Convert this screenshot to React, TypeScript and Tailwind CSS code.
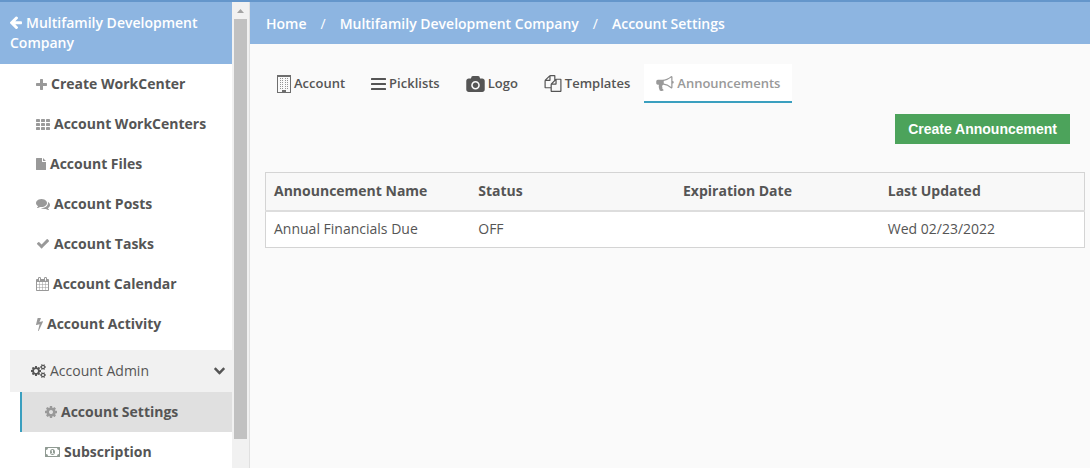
import type { ReactNode } from "react";

type IconProps = { className?: string };

type GlyphProps = IconProps & { box: string; d?: string; children?: ReactNode };

function Glyph({ box, d, className = "", children }: GlyphProps) {
  return (
    <svg viewBox={box} fill="currentColor" aria-hidden="true" className={`shrink-0 ${className}`}>
      {d ? <path d={d} /> : children}
    </svg>
  );
}

const ArrowLeft = ({ className }: IconProps) => (
  <Glyph
    box="64 128 1472 1600"
    className={className}
    d="M1536 896v128q0 53-32.5 90.5t-84.5 37.5h-704l293 294q38 36 38 90t-38 90l-75 76q-37 37-90 37-52 0-91-37l-651-652q-37-37-37-90 0-52 37-91l651-650q38-38 91-38 52 0 90 38l75 74q38 38 38 91t-38 91l-293 293h704q52 0 84.5 37.5t32.5 90.5z"
  />
);

const Plus = ({ className }: IconProps) => (
  <Glyph
    box="192 128 1408 1408"
    className={className}
    d="M1600 736v192q0 40-28 68t-68 28h-416v416q0 40-28 68t-68 28h-192q-40 0-68-28t-28-68v-416h-416q-40 0-68-28t-28-68v-192q0-40 28-68t68-28h416v-416q0-40 28-68t68-28h192q40 0 68 28t28 68v416h416q40 0 68 28t28 68z"
  />
);

const Grid = ({ className }: IconProps) => (
  <Glyph box="0 0 14 11" className={className}>
    {[0, 4, 8].map((y) =>
      [0, 5, 10].map((x) => <rect key={`${x}-${y}`} x={x} y={y} width="4" height="3" rx="0.4" />)
    )}
  </Glyph>
);

const File = ({ className }: IconProps) => (
  <Glyph box="0 0 10 12" className={className} d="M.6 0H6v3.4q0 .6.6.6H10v7.4q0 .6-.6.6H.6q-.6 0-.6-.6V.6Q0 0 .6 0zM7 0.1L9.9 3H7z" />
);

const Comments = ({ className }: IconProps) => (
  <Glyph
    box="0 256 1792 1408"
    className={className}
    d="M1408 768q0 139-94 257t-256.5 186.5-353.5 68.5q-86 0-176-16-124 88-278 128-36 9-86 16h-3q-11 0-20.5-8t-11.5-21q-1-3-1-6.5t.5-6.5 2-6l2.5-5 3.5-5.5 4-5 4.5-5 4-4.5q5-6 23-25t26-29.5 22.5-29 25-38.5 20.5-44q-124-72-195-177t-71-224q0-139 94-257t256.5-186.5 353.5-68.5 353.5 68.5 256.5 186.5 94 257zm384 256q0 120-71 224.5t-195 176.5q10 24 20.5 44t25 38.5 22.5 29 26 29.5 23 25q1 1 4 4.5t4.5 5 4 5 3.5 5.5l2.5 5 2 6 .5 6.5-1 6.5q-3 14-13 22t-22 7q-50-7-86-16-154-40-278-128-90 16-176 16-271 0-472-132 58 4 88 4 161 0 309-45t264-129q125-92 192-212t67-254q0-77-23-152 129 71 204 178t75 230z"
  />
);

const Check = ({ className }: IconProps) => (
  <Glyph
    box="0 320 1792 1280"
    className={className}
    d="M1671 566q0 40-28 68l-724 724-136 136q-28 28-68 28t-68-28l-136-136-362-362q-28-28-28-68t28-68l136-136q28-28 68-28t68 28l294 295 656-657q28-28 68-28t68 28l136 136q28 28 28 68z"
  />
);

const Calendar = ({ className }: IconProps) => (
  <Glyph
    box="64 0 1664 1792"
    className={className}
    d="M192 1664h288v-288h-288v288zm352 0h320v-288h-320v288zm-352-352h288v-320h-288v320zm352 0h320v-320h-320v320zm-352-384h288v-288h-288v288zm736 736h320v-288h-320v288zm-384-736h320v-288h-320v288zm768 736h288v-288h-288v288zm-384-352h320v-320h-320v320zm-352-864v-288q0-13-9.5-22.5t-22.5-9.5h-64q-13 0-22.5 9.5t-9.5 22.5v288q0 13 9.5 22.5t22.5 9.5h64q13 0 22.5-9.5t9.5-22.5zm736 864h288v-320h-288v320zm-384-384h320v-288h-320v288zm384 0h288v-288h-288v288zm32-480v-288q0-13-9.5-22.5t-22.5-9.5h-64q-13 0-22.5 9.5t-9.5 22.5v288q0 13 9.5 22.5t22.5 9.5h64q13 0 22.5-9.5t9.5-22.5zm384-64v1280q0 52-38 90t-90 38h-1408q-52 0-90-38t-38-90v-1280q0-52 38-90t90-38h128v-96q0-66 47-113t113-47h64q66 0 113 47t47 113v96h384v-96q0-66 47-113t113-47h64q66 0 113 47t47 113v96h128q52 0 90 38t38 90z"
  />
);

const Bolt = ({ className }: IconProps) => (
  <Glyph
    box="448 0 896 1792"
    className={className}
    d="M1333 566q18 20 7 44l-540 1157q-13 25-42 25-4 0-14-2-17-5-25.5-19t-4.5-30l197-808-406 101q-4 1-12 1-18 0-31-11-18-15-13-39l201-825q4-14 16-23t28-9h328q19 0 32 12.5t13 29.5q0 8-5 18l-171 463 396-98q8-2 12-2 19 0 34 15z"
  />
);

const Cogs = ({ className }: IconProps) => (
  <Glyph
    box="0 0 1920 1792"
    className={className}
    d="M896 896q0-106-75-181t-181-75-181 75-75 181 75 181 181 75 181-75 75-181zm768 512q0-52-38-90t-90-38-90 38-38 90q0 53 37.5 90.5t90.5 37.5 90.5-37.5 37.5-90.5zm0-1024q0-52-38-90t-90-38-90 38-38 90q0 53 37.5 90.5t90.5 37.5 90.5-37.5 37.5-90.5zm-384 421v185q0 10-7 19.5t-16 10.5l-155 24q-11 35-32 76 34 48 90 115 7 11 7 20 0 12-7 19-23 30-82.5 89.5t-78.5 59.5q-11 0-21-7l-115-90q-37 19-77 31-11 108-23 155-7 24-30 24h-186q-11 0-20-7.5t-10-17.5l-23-153q-34-10-75-31l-118 89q-7 7-20 7-11 0-21-8-144-133-144-160 0-9 7-19 10-14 41-53t47-61q-23-44-35-82l-152-24q-10-1-17-9.5t-7-19.5v-185q0-10 7-19.5t16-10.5l155-24q11-35 32-76-34-48-90-115-7-11-7-20 0-12 7-20 22-30 82-89t79-59q11 0 21 7l115 90q34-18 77-32 11-108 23-154 7-24 30-24h186q11 0 20 7.5t10 17.5l23 153q34 10 75 31l118-89q8-7 20-7 11 0 21 8 144 133 144 160 0 8-7 19-12 16-42 54t-45 60q23 48 34 82l152 23q10 2 17 10.5t7 19.5zm640 533v140q0 16-149 31-12 27-30 52 51 113 51 138 0 4-4 7-122 71-124 71-8 0-46-47t-52-68q-20 2-30 2t-30-2q-14 21-52 68t-46 47q-2 0-124-71-4-3-4-7 0-25 51-138-18-25-30-52-149-15-149-31v-140q0-16 149-31 13-29 30-52-51-113-51-138 0-4 4-7 4-2 35-20t59-34 30-16q8 0 46 46.5t52 67.5q20-2 30-2t30 2q51-71 92-112l6-2q4 0 124 70 4 3 4 7 0 25-51 138 17 23 30 52 149 15 149 31zm0-1024v140q0 16-149 31-12 27-30 52 51 113 51 138 0 4-4 7-122 71-124 71-8 0-46-47t-52-68q-20 2-30 2t-30-2q-14 21-52 68t-46 47q-2 0-124-71-4-3-4-7 0-25 51-138-18-25-30-52-149-15-149-31v-140q0-16 149-31 13-29 30-52-51-113-51-138 0-4 4-7 4-2 35-20t59-34 30-16q8 0 46 46.5t52 67.5q20-2 30-2t30 2q51-71 92-112l6-2q4 0 124 70 4 3 4 7 0 25-51 138 17 23 30 52 149 15 149 31z"
  />
);

const Cog = ({ className }: IconProps) => (
  <Glyph
    box="128 128 1536 1536"
    className={className}
    d="M1152 896q0-106-75-181t-181-75-181 75-75 181 75 181 181 75 181-75 75-181zm512-109v222q0 12-8 23t-20 13l-185 28q-19 54-39 91 35 50 107 138 10 12 10 25t-9 23q-27 37-99 108t-94 71q-12 0-26-9l-138-108q-44 23-91 38-16 136-29 186-7 28-36 28h-222q-14 0-24.5-8.5t-11.5-21.5l-28-184q-49-16-90-37l-141 107q-10 9-25 9-14 0-25-11-126-114-165-168-7-10-7-23 0-12 8-23 15-21 51-66.5t54-70.5q-27-50-41-99l-183-27q-13-2-21-12.5t-8-23.5v-222q0-12 8-23t19-13l186-28q14-46 39-92-40-57-107-138-10-12-10-24 0-10 9-23 26-36 98.5-107.5t94.5-71.5q13 0 26 10l138 107q44-23 91-38 16-136 29-186 7-28 36-28h222q14 0 24.5 8.5t11.5 21.5l28 184q49 16 90 37l142-107q9-9 24-9 13 0 25 10 129 119 165 170 7 8 7 22 0 12-8 23-15 21-51 66.5t-54 70.5q26 50 41 98l183 28q13 2 21 12.5t8 23.5z"
  />
);

const Money = ({ className }: IconProps) => (
  <Glyph box="0 0 15 10" className={className}>
    <path fillRule="evenodd" d="M.5 0h14q.5 0 .5.5v9q0 .5-.5.5H.5Q0 10 0 9.500V.5Q0 0 .5 0zM3 1Q3 3 1 3v4q2 0 2 2h9q0-2 2-2V3q-2 0-2-2z" />
    <path fillRule="evenodd" d="M7.500 2C9 2 10 3.300 10 5S9 8 7.500 8 5 6.700 5 5s1-3 2.500-3zM7.200 3L6.200 3.900l.5.5.3-.2V6h-.8v.8h2.600V6H8V3z" />
  </Glyph>
);

const ChevronDown = ({ className }: IconProps) => (
  <Glyph
    box="90 500 1612 1100"
    className={className}
    d="M1683 808l-742 741q-19 19-45 19t-45-19l-742-741q-19-19-19-45.5t19-45.5l166-165q19-19 45-19t45 19l531 531 531-531q19-19 45-19t45 19l166 165q19 19 19 45.500t-19 45.500z"
  />
);

const Building = ({ className }: IconProps) => (
  <Glyph box="0 0 14 18" className={className}>
    <path fillRule="evenodd" opacity="0.85" d="M0 0h14v18H0zM1 2v15h4v-2h4v2h4V2z" />
    <g opacity="0.6">
      {[3, 5, 7, 9, 11, 13].map((y) =>
        [3, 5, 8, 10].map((x) => <rect key={`${x}-${y}`} x={x} y={y} width="1" height="1" />)
      )}
    </g>
  </Glyph>
);

const Bars = ({ className }: IconProps) => (
  <Glyph box="0 0 15 12" className={className}>
    {[0, 5, 10].map((y) => (
      <rect key={y} y={y} width="15" height="2" rx="0.5" />
    ))}
  </Glyph>
);

const Camera = ({ className }: IconProps) => (
  <Glyph
    box="0 0 1920 1664"
    className={className}
    d="M960 672q119 0 203.5 84.500t84.500 203.500-84.500 203.500-203.500 84.500-203.500-84.500-84.500-203.500 84.500-203.500 203.500-84.500zm704-416q106 0 181 75t75 181v896q0 106-75 181t-181 75h-1408q-106 0-181-75t-75-181v-896q0-106 75-181t181-75h224l51-136q19-49 69.500-84.500t103.500-35.500h512q53 0 103.500 35.500t69.500 84.500l51 136h224zm-704 1152q185 0 316.500-131.500t131.500-316.500-131.500-316.500-316.500-131.500-316.500 131.500-131.500 316.500 131.500 316.500 316.500 131.500z"
  />
);

const Copy = ({ className }: IconProps) => (
  <Glyph
    box="0 0 1792 1792"
    className={className}
    d="M1696 384q40 0 68 28t28 68v1216q0 40-28 68t-68 28h-960q-40 0-68-28t-28-68v-288h-544q-40 0-68-28t-28-68v-672q0-40 20-88t48-76l408-408q28-28 76-48t88-20h416q40 0 68 28t28 68v328q68-40 128-40h416zm-544 213l-299 299h299v-299zm-640-384l-299 299h299v-299zm196 647l316-316v-416h-384v416q0 40-28 68t-68 28h-416v640h512v-256q0-40 20-88t48-76zm956 804v-1152h-384v416q0 40-28 68t-68 28h-416v640h896z"
  />
);

const Bullhorn = ({ className }: IconProps) => (
  <Glyph
    box="0 128 1792 1536"
    className={className}
    d="M1664 640q53 0 90.5 37.5t37.5 90.5-37.5 90.5-90.5 37.5v384q0 52-38 90t-90 38q-417-347-812-380-58 19-91 66t-31 100.5 40 92.5q-20 33-23 65.5t6 58 33.5 55 48 50 61.5 50.5q-29 58-111.5 83t-168.5 11.5-132-55.5q-7-23-29.5-87.5t-32-94.5-23-89-15-101 3.5-98.5 22-110.5h-122q-66 0-113-47t-47-113v-192q0-66 47-113t113-47h480q435 0 896-384 52 0 90 38t38 90v384zm-128 604v-954q-394 302-768 343v270q377 42 768 341z"
  />
);

const menu = [
  { label: "Create WorkCenter", icon: <Plus className="w-[11px] h-[11px]" /> },
  { label: "Account WorkCenters", icon: <Grid className="w-[14px] h-[11px]" /> },
  { label: "Account Files", icon: <File className="w-[10px] h-[12px]" /> },
  { label: "Account Posts", icon: <Comments className="w-[14px] h-[11px]" /> },
  { label: "Account Tasks", icon: <Check className="w-[14px] h-[10px]" /> },
  { label: "Account Calendar", icon: <Calendar className="w-[13px] h-[14px]" /> },
  { label: "Account Activity", icon: <Bolt className="w-[7px] h-[14px]" /> },
];

const tabs = [
  { label: "Account", icon: <Building className="w-[14px] h-[18px]" /> },
  { label: "Picklists", icon: <Bars className="w-[15px] h-[12px]" /> },
  { label: "Logo", icon: <Camera className="w-[19px] h-[16px]" /> },
  { label: "Templates", icon: <Copy className="w-[18px] h-[17px]" /> },
  { label: "Announcements", icon: <Bullhorn className="w-[18px] h-[15px]" />, active: true },
];

const crumbs = ["Home", "Multifamily Development Company", "Account Settings"];

const columns = ["Announcement Name", "Status", "Expiration Date", "Last Updated"];

const announcements = [
  { name: "Annual Financials Due", status: "OFF", expires: "", updated: "Wed 02/23/2022" },
];

function Sidebar() {
  return (
    <aside className="flex w-[250px] shrink-0 border-r border-[#e0e0e0]">
      <div className="flex-1 min-w-0 overflow-hidden bg-white">
        <a href="#company" className="block bg-[#8db5e1] px-2.5 py-[11px] leading-5 font-semibold text-white">
          <ArrowLeft className="inline-block align-baseline w-[12px] h-[13px] -mb-px mr-1" />
          Multifamily Development Company
        </a>

        <nav>
          {menu.map((item) => (
            <a key={item.label} href="#menu" className="flex items-center gap-1 h-10 pl-9 font-bold">
              <span className="text-[#999]">{item.icon}</span>
              {item.label}
            </a>
          ))}

          {/* Expanded admin group */}
          <button type="button" aria-expanded="true" className="flex items-center gap-1 w-full mt-1.5 border-l-10 border-white bg-[#f1f1f1] h-[42px] pl-[21px] pr-[7px]">
            <Cogs className="w-[15px] h-[14px]" />
            Account Admin
            <ChevronDown className="w-[11px] h-[8px] ml-auto" />
          </button>
          <div className="pl-5">
            <a href="#settings" aria-current="page" className="flex items-center gap-1 h-10 pl-[23px] border-l-2 border-[#3a9fbf] bg-[#e0e0e0] font-bold">
              <Cog className="w-[12px] h-[12px] text-[#999]" />
              Account Settings
            </a>
            <a href="#subscription" className="flex items-center gap-1 h-10 pl-[25px] font-bold">
              <Money className="w-[15px] h-[10px] text-[#8f9a92]" />
              Subscription
            </a>
          </div>
        </nav>
      </div>

      {/* Scroll track */}
      <div className="flex flex-col items-center w-[17px] bg-[#f1f1f1]">
        <svg viewBox="0 0 7 4" fill="#a3a3a3" aria-hidden="true" className="w-[7px] h-[4px] mt-[7px] mb-[6px]">
          <path d="M3.500 0L7 4H0z" />
        </svg>
        <div className="w-[13px] h-[420px] bg-[#c1c1c1]" />
      </div>
    </aside>
  );
}

export default function App() {
  return (
    <div className="flex flex-col h-screen overflow-hidden border-t-2 border-[#6496cb] bg-[#fafafa] font-['Open_Sans',sans-serif] text-sm text-[#555]">
      <div className="flex flex-1 min-h-0">
        <Sidebar />

        <main className="flex-1 min-w-0">
          <nav aria-label="Breadcrumb" className="bg-[#8db5e1] px-4 pt-3 pb-2.5 flex items-center font-semibold text-white">
            {crumbs.map((crumb, i) => (
              <span key={crumb} className="flex">
                {i > 0 && <span className="px-3.5 font-normal">/</span>}
                <a href="#crumb">{crumb}</a>
              </span>
            ))}
          </nav>

          <div className="pl-[15px] pr-[5px] pt-5">
            <div role="tablist" className="flex gap-0.5">
              {tabs.map((tab) => (
                <button
                  key={tab.label}
                  type="button"
                  role="tab"
                  aria-selected={!!tab.active}
                  className={`flex items-center gap-[3px] h-[39px] pt-0.5 px-3 border-b-2 text-[13px] font-semibold ${
                    tab.active ? "bg-white border-[#3a9fbf] text-[#999]" : "border-transparent"
                  }`}
                >
                  {tab.icon}
                  {tab.label}
                </button>
              ))}
            </div>

            <div className="flex justify-end pt-[11px] pr-[15px]">
              <button type="button" className="h-[30px] px-[13px] bg-[#4ca35b] font-['Liberation_Sans',sans-serif] font-bold text-white">
                Create Announcement
              </button>
            </div>

            <table className="w-full mt-7 table-fixed border-collapse border border-[#d4d4d4] bg-white text-left">
              <thead>
                <tr className="bg-[#f8f8f8] border-b-2 border-[#ddd]">
                  {columns.map((col) => (
                    <th key={col} className="h-[38px] px-2 font-bold">{col}</th>
                  ))}
                </tr>
              </thead>
              <tbody>
                {announcements.map((row) => (
                  <tr key={row.name}>
                    <td className="h-[37px] px-2">{row.name}</td>
                    <td className="px-2">{row.status}</td>
                    <td className="px-2">{row.expires}</td>
                    <td className="px-2">{row.updated}</td>
                  </tr>
                ))}
              </tbody>
            </table>
          </div>
        </main>
      </div>
    </div>
  );
}
